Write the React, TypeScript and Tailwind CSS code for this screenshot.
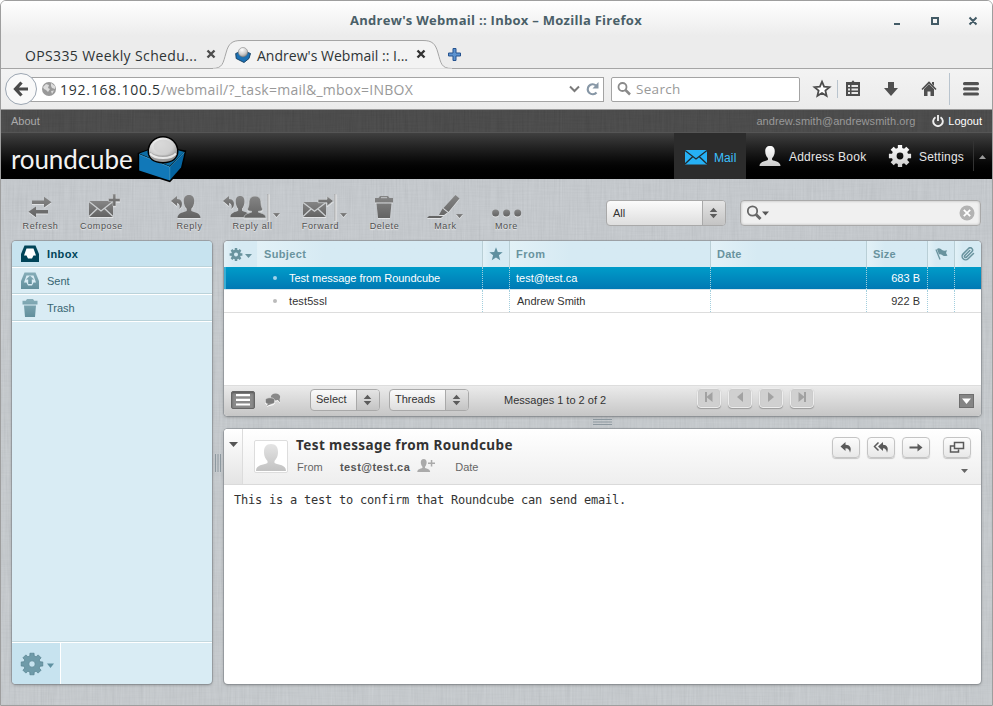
import React from "react";

const UI = "font-['Open_Sans',sans-serif]";

function gearPath(cx: number, cy: number, outer: number, inner: number, hole: number) {
  const pts: string[] = [];
  for (let i = 0; i < 8; i++) {
    const a = (i * Math.PI) / 4;
    const at = (r: number, d: number) =>
      `${(cx + r * Math.sin(a + d)).toFixed(2)} ${(cy - r * Math.cos(a + d)).toFixed(2)}`;
    pts.push(at(inner, -0.27), at(outer, -0.19), at(outer, 0.19), at(inner, 0.27));
  }
  return `M${pts.join("L")}Z M${cx - hole} ${cy}a${hole} ${hole} 0 1 0 ${hole * 2} 0a${hole} ${hole} 0 1 0 ${-hole * 2} 0Z`;
}

const PERSON =
  "M12 0c3.6 0 5.2 2.4 5.2 6 0 3.400-1.300 6.500-2.900 7.800v2.200c3 1.400 9.200 1.800 9.200 7H.5c0-5.200 6.200-5.600 9.200-7v-2.200C8.100 12.500 6.800 9.400 6.800 6c0-3.600 1.600-6 5.200-6z";
const WOMAN =
  "M11 0c4.500 0 6 3 6 7 0 3.500 1.500 5 1.500 7-1 1-2.500 1.200-4 1.200v1c3 1 7.500 1.800 7.500 5.800H0c0-4 4.500-4.800 7.500-5.800v-1c-1.500 0-3-.2-4-1.200 0-2 1.500-3.500 1.500-7 0-4 1.500-7 6-7z";
const CURVED = "M0 5L6 0v3c4 .2 6 3 4.500 7.500L8.500 13c.6-3.500 0-5.500-2.500-6v3z";

/* Woven cloth grain laid under the panels and over the top line. */
function Linen({ id, opacity }: { id: string; opacity: number }) {
  return (
    <svg className="pointer-events-none absolute inset-0 h-full w-full" opacity={opacity}>
      <filter id={id + "h"} x="0" y="0" width="100%" height="100%">
        <feTurbulence type="fractalNoise" baseFrequency="0.03 0.6" numOctaves="2" seed="3" />
        <feColorMatrix type="saturate" values="0" />
        <feComponentTransfer><feFuncA type="linear" slope="0" intercept="0.5" /></feComponentTransfer>
      </filter>
      <filter id={id + "v"} x="0" y="0" width="100%" height="100%">
        <feTurbulence type="fractalNoise" baseFrequency="0.6 0.03" numOctaves="2" seed="8" />
        <feColorMatrix type="saturate" values="0" />
        <feComponentTransfer><feFuncA type="linear" slope="0" intercept="0.5" /></feComponentTransfer>
      </filter>
      <rect width="100%" height="100%" filter={`url(#${id}h)`} />
      <rect width="100%" height="100%" filter={`url(#${id}v)`} />
    </svg>
  );
}

function Updown() {
  return (
    <svg width="9" height="12" viewBox="0 0 9 12" fill="#5c5c5c">
      <path d="M4.500 0.800L8.300 5H.7z M4.500 11.200L.7 7h7.600z" />
    </svg>
  );
}

function Select({ label, className, pad }: { label: string; className: string; pad: string }) {
  return (
    <div className={`flex items-stretch overflow-hidden rounded-[4px] border border-[#a9a9a9] bg-linear-to-b from-[#fbfbfb] to-[#dedede] text-[#333] ${className}`}>
      <span className={`flex flex-1 items-center ${pad}`}>{label}</span>
      <span className="flex w-[23px] items-center justify-center border-l border-[#a9a9a9] bg-linear-to-b from-[#e4e4e4] to-[#c4c4c4] pr-[1px]">
        <Updown />
      </span>
    </div>
  );
}

function Tool({ label, className = "", shift = "", children }: { label: string; className?: string; shift?: string; children: React.ReactNode }) {
  return (
    <div className={`flex w-[60px] shrink-0 flex-col items-center ${className}`}>
      <svg width="60" height="30" viewBox="0 0 60 30" fill="url(#tool)" className="overflow-visible drop-shadow-[0_1px_0_rgba(255,255,255,0.5)]">
        {children}
      </svg>
      <span className={`pl-[1px] text-[9px] leading-[12px] tracking-[0.620px] whitespace-nowrap text-[#505050] [text-shadow:0_1px_1px_#eee] ${shift}`}>{label}</span>
    </div>
  );
}

function Envelope({ x, y, w, h, fill, line }: { x: number; y: number; w: number; h: number; fill: string; line: string }) {
  return (
    <g>
      <rect x={x} y={y} width={w} height={h} fill={fill} />
      <path
        d={`M${x} ${y + 0.5}L${x + w / 2} ${y + h * 0.62}L${x + w} ${y + 0.5}M${x} ${y + h - 0.500}L${x + w * 0.36} ${y + h * 0.45}M${x + w} ${y + h - 0.500}L${x + w * 0.64} ${y + h * 0.45}`}
        fill="none" stroke={line} strokeWidth="1.3"
      />
    </g>
  );
}

function Toolbar() {
  return (
    <div className="flex h-[61px] items-start pt-[11px] pl-[9px]">
      <Tool label="Refresh">
        <path d="M22 10.200h12V6.500L41.500 12 34 17.500v-3.700H22z M38 20.200H26v-3.700L18.500 22l7.500 5.500v-3.700h12z" transform="translate(0 .5) scale(1 .97)" />
      </Tool>
      <Tool label="Compose" className="ml-[1px]">
        <Envelope x={18} y={11} w={24} h={16} fill="url(#tool)" line="#cdd0d2" />
        <path d="M41.800 4h3v4.500h4.200v3h-4.200V16h-3v-4.500h-4.300v-3h4.300z" stroke="#c8cbcd" strokeWidth=".5" />
      </Tool>
      <Tool label="Reply" className="ml-[28px]">
        <path d={CURVED} transform="translate(12 6)" />
        <path d={PERSON} transform="translate(18 5)" />
      </Tool>
      <Tool label="Reply all" className="ml-[3px]" shift="tracking-[0.500px]">
        <path d={CURVED} transform="translate(1 6)" />
        <path d={PERSON} transform="translate(8 6) scale(.84 .92)" />
        <path d={WOMAN} transform="translate(22 6)" stroke="#c3c6c8" strokeWidth=".8" />
        <path d="M46 4v27" stroke="#999" /><path d="M47 4v27" stroke="#ddd" />
        <path d="M51 23h7l-3.500 4z" />
      </Tool>
      <Tool label="Forward" className="ml-[8px]">
        <Envelope x={13} y={12} w={23} h={15} fill="url(#tool)" line="#cdd0d2" />
        <path d="M28 9.300h9V6L43.500 11 37 16v-3.300h-9z" stroke="#c8cbcd" strokeWidth=".8" />
        <path d="M45 4v27" stroke="#999" /><path d="M46 4v27" stroke="#ddd" />
        <path d="M50 23h7l-3.500 4z" />
      </Tool>
      <Tool label="Delete" className="ml-[4px]">
        <path d="M26 6h8l1.500 2H39v4.500H21V8h3.500z M22.500 13.500h15L36 28H24z" />
        <path d="M27 7.700h6" stroke="#c3c6c8" />
      </Tool>
      <Tool label="Mark" className="ml-[1px]">
        <path d="M40.500 5l4 3.500L33.500 22l-5-4z M27.500 18.500l5 4L29 25h-5z M14 26h14l-2 2H12z" />
        <path d="M41 24h7l-3.500 4z" />
      </Tool>
      <Tool label="More" className="ml-[1px]">
        <circle cx="19.600" cy="23" r="3.500" /><circle cx="30.600" cy="23" r="3.500" /><circle cx="41.700" cy="23" r="3.500" />
      </Tool>
      <Select label="All" className="mt-[10px] ml-[70px] h-[26px] w-[120px] text-[11px]" pad="pl-[6px]" />
      <div className="mt-[10px] ml-[14px] flex h-[26px] w-[241px] items-center justify-between rounded-[4px] border border-[#a9a9a9] bg-[#f0f0f0] pr-[5px] pl-[5px] shadow-[inset_0_0_2px_1px_rgba(0,0,0,0.12)]">
        <svg width="24" height="16" viewBox="0 0 24 16">
          <circle cx="6.500" cy="6" r="4.700" fill="none" stroke="#666" strokeWidth="1.800" />
          <path d="M10 9.500l4.500 4.500" stroke="#666" strokeWidth="3" /><path d="M16 6.500h7l-3.500 4z" fill="#555" />
        </svg>
        <svg width="16" height="16" viewBox="0 0 16 16">
          <circle cx="8" cy="8" r="7.500" fill="#b3b3b3" /><path d="M4.800 4.800l6.400 6.400M11.200 4.800l-6.400 6.400" stroke="#fff" strokeWidth="1.800" />
        </svg>
      </div>
    </div>
  );
}

function Folder({ label, active = false, children }: { label: string; active?: boolean; children: React.ReactNode }) {
  return (
    <div className={`flex h-[27px] items-start border-b border-white ${active ? "bg-[#c7e3ef]" : ""}`}>
      <div className="flex h-[26px] w-full items-center border-b border-[#bbd3da] pl-[8px]">
        <svg width="20" height="20" viewBox="0 0 20 20" fill={active ? "#004458" : "url(#teal)"}>{children}</svg>
        <span className={`mt-[2px] ml-[7px] text-[11px] ${active ? "font-bold tracking-[0.400px] text-[#004458]" : "text-[#376572]"}`}>{label}</span>
      </div>
    </div>
  );
}

function Sidebar() {
  return (
    <div className="flex w-[200px] flex-col overflow-hidden rounded-[4px] bg-[#d9ecf4] shadow-[0_0_0_1px_rgba(130,135,140,0.55),0_1px_3px_rgba(80,80,80,0.5)]">
      <Folder label="Inbox" active>
        <path d="M4.500 1.500h11L19 10v8H1v-8z" />
        <path d="M6.500 4.500h7l2.500 7h-2.500l-1.500 3H8l-1.500-3H4z" fill="#fff" />
      </Folder>
      <Folder label="Sent">
        <path d="M4.500 1.500h11L19 10v8H1v-8z" />
        <path d="M6.500 4.500h7l2.500 7h-2.500l-1.500 3H8l-1.500-3H4z" fill="#d9ecf4" />
        <path d="M10 4.500l4 4h-2.200V13H8.200V8.500H6z" />
      </Folder>
      <Folder label="Trash">
        <path d="M7 1h6l1.200 1.700H17.500V6.500h-15V2.700h3.300z M4 7.500h12L15 19H5z" />
      </Folder>
      <div className="flex-1" />
      <div className="flex h-[43px] border-t border-[#c3d8df]">
        <div className="flex w-full border-t border-white">
          <div className="flex w-[49px] items-center border-r border-white bg-[#c7e3ef] pl-[8px]">
            <svg width="36" height="24" viewBox="0 0 36 24">
              <path d={gearPath(12, 12, 11, 8.3, 3.2)} fill="#6f9ba9" stroke="#4e7986" strokeWidth=".6" fillRule="evenodd" />
              <path d="M27 11.500h7l-3.500 4.500z" fill="#5f91a1" />
            </svg>
          </div>
        </div>
      </div>
    </div>
  );
}

const HEAD = "flex h-full items-center bg-linear-to-r from-[#e2f1f7] to-[#d6eaf3] to-30% border-r border-[#b9cfd6] font-bold text-[11px] text-[#69939e]";
const DOT = "h-full flex items-center border-r border-dotted border-[#a3cfde]";

function Row({ subject, from, size, selected = false }: { subject: string; from: string; size: string; selected?: boolean }) {
  return (
    <div className={`flex h-[23px] border-b text-[11px] ${selected ? "border-[#d8e6ec] bg-linear-to-b from-[#009cc9] to-[#0079b4] text-white" : "border-[#ddd] text-[#333]"}`}>
      <div className={`flex w-[259px] items-center pl-[49px] ${DOT} ${selected ? "shadow-[inset_2px_0_0_#3aaed4]" : ""}`}>
        <span className={`h-[4px] w-[4px] rounded-full ${selected ? "bg-[#9fd3ea]" : "bg-[#bbb]"}`} />
        <span className={`ml-[12px] whitespace-nowrap ${selected ? "tracking-[-0.040px]" : "tracking-[0.100px]"}`}>{subject}</span>
      </div>
      <div className={`w-[27px] ${DOT}`} />
      <div className={`w-[201px] ${selected ? "pl-[6px]" : "pl-[7px]"} ${DOT}`}>{from}</div>
      <div className={`w-[156px] ${DOT}`} />
      <div className={`w-[61px] justify-end pr-[7px] ${DOT}`}>{size}</div>
      <div className={`w-[27px] ${DOT}`} />
    </div>
  );
}

function PageButton({ d }: { d: string }) {
  return (
    <div className="flex h-[20px] w-[24px] items-center justify-center rounded-[4px] border border-[#ededed] bg-[#d0d0d0] shadow-[0_1px_1px_rgba(0,0,0,0.25),inset_0_0_1px_#aaa]">
      <svg width="12" height="12" viewBox="0 0 12 12" fill="#a2a2a2" className="mb-[3px]"><path d={d} /></svg>
    </div>
  );
}

function MessageList() {
  return (
    <div className="flex h-[175px] flex-col overflow-hidden rounded-[4px] bg-white shadow-[0_0_0_1px_rgba(130,135,140,0.55),0_1px_3px_rgba(80,80,80,0.5)]">
      <div className="flex h-[26px]">
        <div className={`w-[34px] pl-[5px] ${HEAD} border-transparent`}>
          <svg width="24" height="15" viewBox="0 0 24 15" fill="#69939e">
            <path d={gearPath(7, 7.5, 6.500, 4.800, 2)} fillRule="evenodd" /><path d="M16 7h7l-3.500 4z" />
          </svg>
        </div>
        <div className={`w-[225px] pl-[6px] tracking-[0.350px] ${HEAD}`}>Subject</div>
        <div className={`w-[27px] justify-center ${HEAD}`}>
          <svg width="14" height="14" viewBox="0 0 14 14" fill="#5f8f9f"><path d="M7 .3l1.800 4.600 4.900.3-3.800 3.100 1.300 4.900L7 10.500l-4.200 2.700 1.300-4.900L.3 5.200l4.900-.3z" /></svg>
        </div>
        <div className={`w-[201px] pl-[6px] tracking-[0.500px] ${HEAD}`}>From</div>
        <div className={`w-[156px] pl-[6px] tracking-[0.200px] ${HEAD}`}>Date</div>
        <div className={`w-[61px] pl-[6px] tracking-[0.200px] ${HEAD}`}>Size</div>
        <div className={`w-[27px] justify-center ${HEAD}`}>
          <svg width="13" height="13" viewBox="0 0 13 13"><path d="M1 1.500l4 10" stroke="#69939e" strokeWidth="1.300" /><path d="M2 1c2-1.500 3.500 0 5 1s3 1 5 .3L11 5l1.500 2.500c-2 .8-3.500.8-5-.3S5 6 4 6.500z" fill="#69939e" /></svg>
        </div>
        <div className={`w-[26px] justify-center border-r-0 ${HEAD}`}>
          <svg width="14" height="14" viewBox="0 0 24 24" fill="none" stroke="#69939e" strokeWidth="2.600" strokeLinecap="round"><path d="M21.400 11.050l-9.200 9.190a6 6 0 0 1-8.490-8.490l9.200-9.190a4 4 0 0 1 5.660 5.660l-9.200 9.190a2 2 0 0 1-2.830-2.830l8.490-8.480" /></svg>
        </div>
      </div>
      <Row subject="Test message from Roundcube" from="test@test.ca" size="683 B" selected />
      <Row subject="test5ssl" from="Andrew Smith" size="922 B" />
      <div className="flex-1" />
      <div className="flex h-[31px] items-start border-t border-[#ddd] bg-linear-to-b from-[#ebebeb] to-[#c6c6c6] text-[11px] text-[#333]">
        <div className="mt-[5px] ml-[7px] flex h-[18px] w-[24px] items-center justify-center rounded-[2px] border border-[#666] bg-[#8a8a8a] shadow-[inset_0_1px_2px_#555]">
          <svg width="14" height="12" viewBox="0 0 14 12" fill="#fff"><path d="M0 0h14v2.200H0zM0 4.700h14v2.200H0zM0 9.400h14v2.200H0z" /></svg>
        </div>
        <svg width="16" height="13" viewBox="0 0 16 13" fill="#888" className="mt-[7px] ml-[10px] drop-shadow-[0_1px_0_#fff]">
          <ellipse cx="10.500" cy="4" rx="4.700" ry="3.500" /><path d="M12 6l3 3.500-.5-5z" />
          <ellipse cx="5" cy="8" rx="4.700" ry="3.300" fill="#7c7c7c" stroke="#d8d8d8" strokeWidth=".7" /><path d="M3 10l-1 3 4-2z" />
        </svg>
        <Select label="Select" className="mt-[3px] ml-[29px] h-[22px] w-[70px]" pad="pl-[5px] pb-[1px]" />
        <Select label="Threads" className="mt-[3px] ml-[9px] h-[22px] w-[80px]" pad="pl-[5px] pb-[1px]" />
        <span className="mt-[6px] ml-[35px] w-[193px] leading-[16px] whitespace-nowrap">Messages 1 to 2 of 2</span>
        <div className="mt-[2px] flex gap-[7px]">
          <PageButton d="M2 1h2v4.500L9.500 1v10L4 6.500V11H2z" />
          <PageButton d="M9 1v10L3 6z" />
          <PageButton d="M3 1l6 5-6 5z" />
          <PageButton d="M10 1H8v4.500L2.500 1v10L8 6.500V11h2z" />
        </div>
        <div className="mt-[8px] ml-[145px] flex h-[14px] w-[15px] items-center justify-center border border-[#6e6e6e] bg-[#858585]">
          <svg width="9" height="6" viewBox="0 0 9 6"><path d="M0 .5h9L4.500 6z" fill="#fff" /></svg>
        </div>
      </div>
    </div>
  );
}

function ActionButton({ className = "", children }: { className?: string; children: React.ReactNode }) {
  return (
    <div className={`flex h-[21px] w-[28px] items-center justify-center rounded-[4px] border border-[#c4c4c4] bg-linear-to-b from-[#fcfcfc] to-[#e8e8e8] shadow-[0_1px_1px_rgba(0,0,0,0.2)] ${className}`}>
      <svg width="16" height="13" viewBox="0 0 16 13" fill="#5a5a5a">{children}</svg>
    </div>
  );
}

function Preview() {
  return (
    <div className="flex h-[255px] flex-col overflow-hidden rounded-[4px] bg-white shadow-[0_0_0_1px_rgba(130,135,140,0.55),0_1px_3px_rgba(80,80,80,0.5)]">
      <div className="flex h-[56px] border-b border-[#dadada] bg-linear-to-b from-white to-[#eeeeee]">
        <div className="flex w-[19px] justify-center border-r border-[#dcdcdc] bg-linear-to-b from-white to-[#e4e4e4] pt-[13px] pl-[1px]">
          <svg width="9" height="5" viewBox="0 0 9 5"><path d="M0 0h9L4.500 5z" fill="#555" /></svg>
        </div>
        <div className="mt-[11px] ml-[11px] h-[33px] w-[34px] rounded-[2px] border border-[#ddd] bg-white">
          <svg width="32" height="31" viewBox="0 0 32 31" fill="url(#avatar)"><path d="M16 3c5 0 7 3 7 8s-2 7-3.500 9v2c4 2 11.500 1.500 11.500 8H1c0-6.500 7.500-6 11.500-8v-2C11 18 9 16 9 11s2-8 7-8z" /></svg>
        </div>
        <div className="ml-[8px] flex flex-1 flex-col">
          <div className="mt-[7px] h-[19px] font-['Noto_Sans',sans-serif] text-[13.500px] leading-[18px] font-bold tracking-[0.410px] text-[#333]">Test message from Roundcube</div>
          <div className="mt-[5px] flex h-[14px] items-center text-[11px] text-[#666]">
            <span className="w-[44px] pl-[1px]">From</span>
            <span className="pt-[1px] font-bold tracking-[0.420px] whitespace-nowrap text-[#555]">test@test.ca</span>
            <svg width="18" height="13" viewBox="0 0 18 13" fill="#aaa" className="ml-[7px] mb-[3px]"><path d={PERSON} transform="scale(.56)" /><path d="M13.800 1h1.500v2.500H18V5h-2.700v2.500h-1.500V5H11V3.500h2.800z" /></svg>
            <span className="ml-[20px]">Date</span>
          </div>
        </div>
        <div className="flex w-[149px] flex-col pt-[8px]">
          <div className="flex">
            <ActionButton><path d="M2.500 5.500L7.500 1v2.800c4.500 0 6.500 3 4.500 8-.5-3-1.500-4.300-4.500-4.500V10z" /></ActionButton>
            <ActionButton className="ml-[7px]"><path d="M5 5.500L10 1v2.800c4 0 6 3 4 8-.5-3-1.500-4.300-4-4.500V10z" /><path d="M5.500 1.500L1.500 5.500l4 4" fill="none" stroke="#5a5a5a" strokeWidth="1.500" /></ActionButton>
            <ActionButton className="ml-[7px]"><path d="M1.500 5.500h8V2.500L14.500 6.500l-5 4v-3h-8z" /></ActionButton>
            <ActionButton className="ml-[13px]"><path d="M5.500 1.500h9v6h-9zM5 5H1.500v6h8V8.500" fill="none" stroke="#5a5a5a" strokeWidth="1.500" /></ActionButton>
          </div>
          <svg width="7" height="4" viewBox="0 0 7 4" className="mt-[11px] ml-[129px]"><path d="M0 0h7L3.500 4z" fill="#666" /></svg>
        </div>
      </div>
      <div className="pt-[6px] pl-[10px] font-['DejaVu_Sans_Mono',monospace] text-[12px] leading-[18px] tracking-[-0.224px] text-[#333]">This is a test to confirm that Roundcube can send email.</div>
    </div>
  );
}

function FavIcon() {
  return (
    <svg width="16" height="16" viewBox="0 0 16 16">
      <path d="M.7 6.500l7-3 7.800 3-1.500 5L9 15.500 1.200 11.500z" fill="#1c71b4" stroke="#123c5e" strokeWidth=".9" />
      <circle cx="8" cy="5.200" r="4.700" fill="url(#ball)" stroke="#777" strokeWidth=".5" />
    </svg>
  );
}

function Chrome() {
  return (
    <div className={`text-[#2e3436] ${UI}`}>
      <div className="flex h-[39px] items-center bg-linear-to-b from-white to-[#ececec] to-90% pr-[14px] text-[#4a5f68]">
        <div className="ml-[349px] flex-1 text-[13px] font-bold tracking-[0.280px] whitespace-nowrap">Andrew's Webmail :: Inbox – Mozilla Firefox</div>
        <svg width="86" height="12" viewBox="0 0 86 12" fill="none" stroke="#435b66" strokeWidth="2">
          <path d="M2 9h6M40 3h6v6h-6zM77.500 2.500l7 7M84.500 2.500l-7 7" />
        </svg>
      </div>
      <div className="relative flex h-[29px] items-center border-b border-[#a5a5a5] bg-[#ececec] pt-[2px] text-[14px]">
        <svg className="absolute top-0 left-[211px]" width="242" height="29" viewBox="0 0 242 29">
          <path d="M0 28.500C11 28.500 11 23 14 13 16.500 3.500 20 .5 29 .5H211c9 0 12.500 3 15 12.500 3 10 3 15.500 14 15.500" fill="#f3f3f3" stroke="#a5a5a5" />
          <path d="M1 29h239" stroke="#f3f3f3" strokeWidth="1" />
        </svg>
        <span className="relative ml-[24px] w-[181px] tracking-[0.370px] whitespace-nowrap">OPS335 Weekly Schedu...</span>
        <svg width="10" height="10" viewBox="0 0 10 10" className="relative mb-[2px]"><path d="M1.500 1.500l7 7M8.500 1.500l-7 7" stroke="#4d4d4d" strokeWidth="2.400" /></svg>
        <span className="relative mb-[1px] ml-[19px]"><FavIcon /></span>
        <span className="relative ml-[6px] w-[159px] tracking-[0.020px] whitespace-nowrap">Andrew's Webmail :: I...</span>
        <svg width="10" height="10" viewBox="0 0 10 10" className="relative mb-[2px]"><path d="M1.500 1.500l7 7M8.500 1.500l-7 7" stroke="#333" strokeWidth="2.400" /></svg>
        <svg width="13" height="13" viewBox="0 0 13 13" className="mb-[1px] ml-[22px]"><path d="M5 .5h3V5h4.500v3H8v4.500H5V8H.5V5H5z" fill="#5d93cf" stroke="#24528f" /></svg>
      </div>
      <div className="flex h-[41px] items-center border-b border-[#9c9c9c] bg-linear-to-b from-[#f3f3f3] to-[#ebebeb] text-[14px]">
        <div className="z-10 ml-[4px] flex h-[32px] w-[32px] items-center justify-center rounded-full border border-[#9ca6b2] bg-[#f9f9f9]">
          <svg width="16" height="16" viewBox="0 0 16 16" fill="none" stroke="#4a4a4a" strokeWidth="3.200"><path d="M15 8H3M8.500 1.500L2.500 8l6 6.500" /></svg>
        </div>
        <div className="-ml-[8px] flex h-[25px] w-[575px] items-center border border-[#a3a3a3] bg-white pl-[10px]">
          <svg width="16" height="16" viewBox="0 0 16 16" className="ml-[1px]"><circle cx="8" cy="8" r="7" fill="#999" /><path d="M2 6l3-3 3 1-1 3 2 1-2 3-2-2-2-1zM10 2l4 3v3l-3-1-1-2zM10 10l3-.5-2 3.500z" fill="#ddd" /></svg>
          <span className="ml-[3px] flex-1 pt-[1px] tracking-[0.250px] whitespace-nowrap text-[#999]"><span className="tracking-[0.750px] text-[#2e3436]">192.168.100.5</span>/webmail/?_task=mail&_mbox=INBOX</span>
          <svg width="11" height="8" viewBox="0 0 11 8" fill="none" stroke="#7a7a7a" strokeWidth="2"><path d="M1 1.500l4.500 4.500L10 1.500" /></svg>
          <svg width="14" height="14" viewBox="0 0 14 14" className="mr-[3px] ml-[6px]"><path d="M10.500 10.500A5 5 0 1 1 10 3.500" fill="none" stroke="#8797a6" strokeWidth="2.200" /><path d="M12.500 0v6.500H6.500z" fill="#8797a6" /></svg>
        </div>
        <div className="ml-[7px] flex h-[25px] w-[189px] items-center rounded-[2px] border border-[#a3a3a3] bg-white pl-[5px] text-[#999]">
          <svg width="14" height="14" viewBox="0 0 14 14" fill="none" stroke="#8a8a8a"><circle cx="5.500" cy="5" r="4" strokeWidth="1.800" /><path d="M8.500 8l4.500 4.500" strokeWidth="2.500" /></svg>
          <span className="ml-[5px] pt-[1px] text-[13.500px] tracking-[0.300px]">Search</span>
        </div>
        <svg width="180" height="36" viewBox="0 0 180 36" className="ml-[7px]" fill="#505050">
          <path d="M15 10.500l2.100 4.900 5.400.5-4.100 3.500 1.200 5.200-4.600-2.800-4.600 2.800 1.200-5.200-4.100-3.500 5.400-.5z" fill="#fff" stroke="#4d4d4d" strokeWidth="1.800" transform="translate(0 .2)" />
          <path d="M30.500 9v18" stroke="#b9c4ce" />
          <path d="M43 11h1.500l1.500-1.700L47.500 11H53v14H39V11z" fill="#4d4d4d" />
          <path d="M41 14h2v2h-2zM44.500 14H51v2h-6.500zM41 17.500h2v2h-2zM44.500 17.500H51v2h-6.500zM41 21h2v2h-2zM44.500 21H51v2h-6.500z" fill="#e8e8e8" />
          <path d="M81 11h6v6h4l-7 8-7-8h4z" />
          <path d="M115 18.500l7-7 7 7" fill="none" stroke="#4d4d4d" strokeWidth="1.600" /><path d="M117 18l5-5 5 5v7h-3.500v-4.500h-3V25H117zM125 11h2v4l-2-2z" />
          <path d="M142.500 2v32" stroke="#b9c4ce" />
          <rect x="156" y="11" width="16" height="3.200" rx="1.500" /><rect x="156" y="16.200" width="16" height="3.200" rx="1.500" /><rect x="156" y="21.400" width="16" height="3.200" rx="1.500" />
        </svg>
      </div>
    </div>
  );
}

function Header() {
  return (
    <div>
      <div className="relative flex h-[23px] items-center border-b border-[#555] bg-[#3d3d3d] text-[11px] text-[#999]">
        <Linen id="dark" opacity={0.16} />
        <span className="relative ml-[10px] flex-1 text-[#aaa]">About</span>
        <span className="relative mr-[17px] tracking-[0.060px]">andrew.smith@andrewsmith.org</span>
        <svg width="12" height="12" viewBox="0 0 12 12" fill="none" stroke="#eee" strokeWidth="1.900" className="relative"><path d="M3.500 2.200a4.800 4.800 0 1 0 5 0M6 0v6" /></svg>
        <span className="relative mr-[10px] ml-[4px] text-white">Logout</span>
      </div>
      <div className="relative flex h-[46px] items-stretch bg-linear-to-b from-[#404040] to-black text-[12px] text-[#e6e6e6]">
        <div className="flex w-[673px] items-start">
          <span className="mt-[9px] ml-[10px] w-[118px] font-['Lato',sans-serif] text-[26px] leading-[34px] tracking-[-0.100px] text-[#f2f2f2]">roundcube</span>
          <svg width="50" height="48" viewBox="0 0 50 48" className="relative z-10 mt-[3px] ml-[8px] -mb-[5px] shrink-0 overflow-visible">
            <path d="M.7 17L12 13h28l9.300 1.500L45.500 33 33 46.300.7 36z" fill="#000" />
            <path d="M2.200 17.500L12 14h28l7.500 2L32.500 30z" fill="#0b6da6" />
            <path d="M2.200 18.500l30.500 12.500v13.500L2.200 34.500z" fill="#1178b8" />
            <path d="M33 31L47.500 17 44 31.500 33 44z" fill="#0564a0" />
            <path d="M2.200 18.500l30.500 12.500L47.500 16.500M32.700 31v13" fill="none" stroke="#41a4d8" strokeWidth=".8" />
            <path d="M10.500 15.500a15.500 15.500 0 0 1 31 0c0 7-6 12-15.500 12s-15.500-5-15.500-12z" fill="#000" />
            <path d="M12 15.500a14 14 0 0 1 28 0c0 6.500-5 10.500-14 10.500s-14-4-14-10.500z" fill="url(#ball)" />
            <ellipse cx="26" cy="10.500" rx="9.500" ry="7" fill="#cfcfcf" opacity=".8" />
            <path d="M12.500 15c5 6 22 6 27 0-.5 7-5.500 10.500-13.500 10.500S13 22 12.500 15z" fill="#999" opacity=".6" />
            <path d="M13 17.500c5 6 21 6 26 0" fill="none" stroke="#fff" strokeWidth="2" opacity=".75" />
          </svg>
        </div>
        <div className="flex w-[72px] items-center bg-[#2c2c2c] pt-[2px] text-[#3cc1ff]">
          <svg width="22" height="16" viewBox="0 0 22 16" className="ml-[11px]"><Envelope x={0} y={1} w={22} h={14.500} fill="#26b1f5" line="#202b30" /></svg>
          <span className="ml-[7px] pt-[1px] tracking-[0.100px]">Mail</span>
        </div>
        <svg width="22" height="20" viewBox="0 0 24 23" preserveAspectRatio="none" fill="url(#white)" className="mt-[13px] ml-[13px]"><path d={PERSON} /></svg>
        <span className="mt-[16px] ml-[8px] w-[79px] leading-[17px] tracking-[0.220px] whitespace-nowrap">Address Book</span>
        <svg width="24" height="24" viewBox="0 0 24 24" fill="url(#white)" fillRule="evenodd" className="mt-[11px] ml-[20px]"><path d={gearPath(12, 12, 11.3, 8.3, 3.400)} /></svg>
        <span className="mt-[16px] ml-[7px] w-[54px] leading-[17px] tracking-[0.200px]">Settings</span>
        <div className="mt-[8px] h-[30px] border-l border-[#333]" />
        <svg width="7" height="4" viewBox="0 0 7 4" className="mt-[22px] ml-[5px]"><path d="M0 4h7L3.500 0z" fill="#999" /></svg>
      </div>
    </div>
  );
}

export default function App() {
  return (
    <div className="flex h-[706px] w-[993px] flex-col overflow-hidden rounded-t-[6px] border border-[#9e9e9e] font-['Liberation_Sans',Arial,sans-serif]">
      <svg width="0" height="0" className="absolute">
        <defs>
          <linearGradient id="tool" x1="0" y1="0" x2="0" y2="1"><stop offset="0" stopColor="#858585" /><stop offset="1" stopColor="#636363" /></linearGradient>
          <linearGradient id="teal" x1="0" y1="0" x2="0" y2="1"><stop offset="0" stopColor="#86adb8" /><stop offset="1" stopColor="#628f9c" /></linearGradient>
          <linearGradient id="white" x1="0" y1="0" x2="0" y2="1"><stop offset="0" stopColor="#fff" /><stop offset="1" stopColor="#ccc" /></linearGradient>
          <linearGradient id="avatar" x1="0" y1="0" x2="0" y2="1"><stop offset="0" stopColor="#e4e4e4" /><stop offset="1" stopColor="#c2c2c2" /></linearGradient>
          <radialGradient id="ball" cx=".4" cy=".25" r=".8"><stop offset="0" stopColor="#fff" /><stop offset=".6" stopColor="#ccc" /><stop offset="1" stopColor="#888" /></radialGradient>
        </defs>
      </svg>
      <Chrome />
      <Header />
      <div className="relative flex-1 bg-[#c6cbcf]">
        <Linen id="light" opacity={0.22} />
        <div className="relative">
          <Toolbar />
          <div className="mt-[1px] flex h-[443px] pl-[11px]">
            <Sidebar />
            <div className="flex w-[12px] items-center justify-center">
              <svg width="6" height="18" viewBox="0 0 6 18"><path d="M.5 0v18M3 0v18M5.500 0v18" stroke="#8d989f" /></svg>
            </div>
            <div className="flex w-[757px] flex-col">
              <MessageList />
              <div className="flex h-[13px] items-center justify-center">
                <svg width="19" height="7" viewBox="0 0 19 7"><path d="M0 .5h19M0 3h19M0 5.500h19" stroke="#8d989f" /></svg>
              </div>
              <Preview />
            </div>
          </div>
        </div>
      </div>
    </div>
  );
}
